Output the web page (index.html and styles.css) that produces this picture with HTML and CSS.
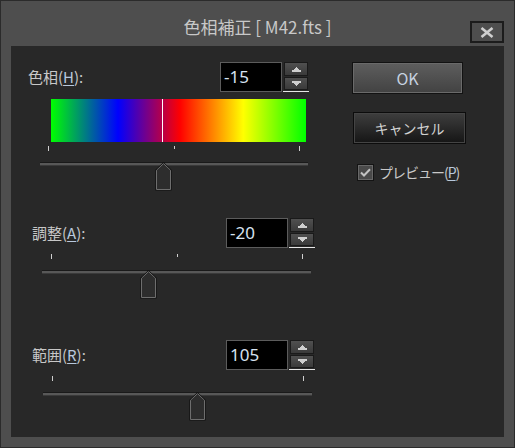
FILE: index.html
```html
<!DOCTYPE html>
<html lang="ja">
<head>
<meta charset="utf-8">
<title>色相補正</title>
<link rel="stylesheet" href="styles.css">
</head>
<body>
<div class="window">
  <header class="titlebar">
    <div class="spacer"></div>
    <h1 class="title">色相補正 [ M42.fts ]</h1>
    <button class="close" aria-label="閉じる">
      <svg width="14" height="11" viewBox="0 0 14 11"><path d="M1.5 1 L12.5 10 M12.5 1 L1.5 10" stroke="#cfcfcf" stroke-width="2.6" fill="none"/></svg>
    </button>
  </header>
  <main class="client">
    <div class="left">
      <section class="group hue">
        <div class="head">
          <span class="label">色相(<u>H</u>):</span>
          <div class="spin">
            <div class="field">-15</div>
            <div class="arrows">
              <div class="arrow up"><svg width="9" height="5" viewBox="0 0 9 5" shape-rendering="crispEdges"><rect x="4" y="0" width="1" height="1" fill="#cfcfcf"/><rect x="3" y="1" width="3" height="1" fill="#cfcfcf"/><rect x="2" y="2" width="5" height="1" fill="#cfcfcf"/><rect x="0" y="3" width="9" height="2" fill="#cfcfcf"/></svg></div>
              <div class="arrow down"><svg width="9" height="5" viewBox="0 0 9 5" shape-rendering="crispEdges"><rect x="0" y="0" width="9" height="2" fill="#cfcfcf"/><rect x="2" y="2" width="5" height="1" fill="#cfcfcf"/><rect x="3" y="3" width="3" height="1" fill="#cfcfcf"/><rect x="4" y="4" width="1" height="1" fill="#cfcfcf"/></svg></div>
              <div class="focus-line"></div>
            </div>
          </div>
        </div>
        <div class="huebar"><div class="marker"></div></div>
        <div class="scale">
          <div class="ticks"><i></i><i class="mid"></i><i></i></div>
          <div class="slider">
            <div class="track"></div>
            <svg class="thumb" style="left:115px" width="17" height="29" viewBox="0 0 17 29"><path d="M8.5 0.3 L16.6 7.8 V28.6 H0.4 V7.8 Z" fill="#0e0e0e"/><path d="M8.5 1.6 L15.5 8.2 V27.5 H1.5 V8.2 Z" fill="#2d2d2d" stroke="#6e6e6e" stroke-width="1"/></svg>
          </div>
        </div>
      </section>

      <section class="group adj">
        <div class="head">
          <span class="label">調整(<u>A</u>):</span>
          <div class="spin">
            <div class="field">-20</div>
            <div class="arrows">
              <div class="arrow up"><svg width="9" height="5" viewBox="0 0 9 5" shape-rendering="crispEdges"><rect x="4" y="0" width="1" height="1" fill="#cfcfcf"/><rect x="3" y="1" width="3" height="1" fill="#cfcfcf"/><rect x="2" y="2" width="5" height="1" fill="#cfcfcf"/><rect x="0" y="3" width="9" height="2" fill="#cfcfcf"/></svg></div>
              <div class="arrow down"><svg width="9" height="5" viewBox="0 0 9 5" shape-rendering="crispEdges"><rect x="0" y="0" width="9" height="2" fill="#cfcfcf"/><rect x="2" y="2" width="5" height="1" fill="#cfcfcf"/><rect x="3" y="3" width="3" height="1" fill="#cfcfcf"/><rect x="4" y="4" width="1" height="1" fill="#cfcfcf"/></svg></div>
              <div class="focus-line"></div>
            </div>
          </div>
        </div>
        <div class="scale">
          <div class="ticks"><i></i><i class="mid"></i><i></i></div>
          <div class="slider">
            <div class="track"></div>
            <svg class="thumb" style="left:98px" width="17" height="29" viewBox="0 0 17 29"><path d="M8.5 0.3 L16.6 7.8 V28.6 H0.4 V7.8 Z" fill="#0e0e0e"/><path d="M8.5 1.6 L15.5 8.2 V27.5 H1.5 V8.2 Z" fill="#2d2d2d" stroke="#6e6e6e" stroke-width="1"/></svg>
          </div>
        </div>
      </section>

      <section class="group range">
        <div class="head">
          <span class="label">範囲(<u>R</u>):</span>
          <div class="spin">
            <div class="field">105</div>
            <div class="arrows">
              <div class="arrow up"><svg width="9" height="5" viewBox="0 0 9 5" shape-rendering="crispEdges"><rect x="4" y="0" width="1" height="1" fill="#cfcfcf"/><rect x="3" y="1" width="3" height="1" fill="#cfcfcf"/><rect x="2" y="2" width="5" height="1" fill="#cfcfcf"/><rect x="0" y="3" width="9" height="2" fill="#cfcfcf"/></svg></div>
              <div class="arrow down"><svg width="9" height="5" viewBox="0 0 9 5" shape-rendering="crispEdges"><rect x="0" y="0" width="9" height="2" fill="#cfcfcf"/><rect x="2" y="2" width="5" height="1" fill="#cfcfcf"/><rect x="3" y="3" width="3" height="1" fill="#cfcfcf"/><rect x="4" y="4" width="1" height="1" fill="#cfcfcf"/></svg></div>
              <div class="focus-line"></div>
            </div>
          </div>
        </div>
        <div class="scale">
          <div class="ticks"><i></i><i></i></div>
          <div class="slider">
            <div class="track"></div>
            <svg class="thumb" style="left:146px" width="17" height="29" viewBox="0 0 17 29"><path d="M8.5 0.3 L16.6 7.8 V28.6 H0.4 V7.8 Z" fill="#0e0e0e"/><path d="M8.5 1.6 L15.5 8.2 V27.5 H1.5 V8.2 Z" fill="#2d2d2d" stroke="#6e6e6e" stroke-width="1"/></svg>
          </div>
        </div>
      </section>
    </div>

    <div class="right">
      <button class="btn ok">OK</button>
      <button class="btn cancel">キャンセル</button>
      <label class="check">
        <span class="box"><svg width="11" height="9" viewBox="0 0 11 9"><path d="M1 4.5 L4 7.5 L10 1.2" stroke="#c4c4c4" stroke-width="2" fill="none"/></svg></span>
        <span class="check-text">プレビュー(<u>P</u>)</span>
      </label>
    </div>
  </main>
</div>
</body>
</html>
```

FILE: styles.css
```css
* {
  box-sizing: border-box;
  margin: 0;
  padding: 0;
}

body {
  margin: 0;
  background: #4e4e4e;
  font-family: "Noto Sans CJK JP", "Noto Sans", sans-serif;
}

.window {
  width: 515px;
  height: 448px;
  border: 1px solid #2b2b2b;
  background: #4e4e4e;
  padding: 0 10px 10px;
  display: flex;
  flex-direction: column;
}

.titlebar {
  height: 45px;
  display: grid;
  grid-template-columns: 1fr auto 1fr;
  align-items: start;
}

.title {
  font-size: 17px;
  font-weight: 400;
  line-height: 20px;
  color: #c8c8c8;
  margin-top: 16px;
  white-space: nowrap;
}

.close {
  justify-self: end;
  width: 34px;
  height: 22px;
  margin-top: 20px;
  border: 2px solid #1c1c1c;
  background: #4e4e4e;
  display: flex;
  align-items: center;
  justify-content: center;
}

.client {
  flex: 1;
  background: #282828;
  display: flex;
  padding-top: 16px;
}

.left {
  width: 320px;
  flex: none;
}

.group.hue {
  margin-left: 17px;
}

.group.adj {
  margin-left: 21px;
  margin-top: 27px;
}

.group.range {
  margin-left: 21px;
  margin-top: 41px;
}

.head {
  display: flex;
  align-items: center;
  height: 30px;
  width: 282px;
}

.hue .head {
  width: 280px;
}

.label {
  font-size: 15px;
  color: #c8c8c8;
  line-height: 20px;
}

.label u,
.check-text u {
  color: #b8c8dc;
  text-underline-offset: 2px;
}

.spin {
  margin-left: auto;
  display: flex;
  gap: 2px;
}

.field {
  width: 62px;
  height: 30px;
  background: #000;
  border: 1px solid #5c5c5c;
  color: #d6e2f0;
  font-family: "Noto Sans", sans-serif;
  font-size: 17px;
  line-height: 27px;
  padding-left: 3px;
}

.arrows {
  width: 24px;
  display: flex;
  flex-direction: column;
  gap: 1px;
}

.arrow {
  border: 1px solid #1a1a1a;
  background: linear-gradient(#505050, #3a3a3a);
  display: flex;
  align-items: center;
  justify-content: center;
}

.arrow.up {
  height: 14px;
}

.arrow.down {
  height: 13px;
}

.focus-line {
  height: 1px;
  background: #e6e6e6;
  margin: 0 -1px;
}

.huebar {
  position: relative;
  margin: 7px 0 0 23px;
  width: 255px;
  height: 43px;
  background: linear-gradient(to right, #00ff00 0%, #0000ff 26.3%, #ff0000 50.6%, #ffff00 75.4%, #00ff00 100%);
}

.marker {
  position: absolute;
  left: 111px;
  top: 0;
  bottom: 0;
  width: 1px;
  background: #ffffff;
}

.scale {
  margin-left: 10px;
  width: 269px;
}

.hue .scale {
  margin-left: 12px;
  width: 268px;
}

.range .scale {
  margin-left: 11px;
}

.ticks {
  height: 5px;
  display: flex;
  justify-content: space-between;
  align-items: flex-start;
  padding: 0 8px 0 9px;
  margin-top: 6px;
}

.hue .ticks {
  padding: 0 8px;
  margin-top: 4px;
}

.ticks i {
  display: block;
  width: 1px;
  height: 5px;
  background: #cfcfcf;
}

.ticks i.mid {
  height: 3px;
}

.slider {
  position: relative;
  height: 29px;
}

.hue .slider {
  margin-top: 1px;
}

.track {
  margin-top: 11px;
  height: 4px;
  border-top: 1px solid #1a1a1a;
  border-bottom: 1px solid #3a3a3a;
  background: #585858;
}

.thumb {
  position: absolute;
  top: 0;
  display: block;
}

.right {
  display: flex;
  flex-direction: column;
  align-items: flex-start;
  padding-left: 21px;
}

.btn {
  height: 32px;
  font-family: "Noto Sans CJK JP", "Noto Sans", sans-serif;
  cursor: default;
}

.btn.ok {
  width: 111px;
  border: 1px solid #121212;
  background: linear-gradient(#5e5e5e, #424242);
  box-shadow: inset 0 0 0 1px #6a6a6a;
  color: #c6d2e0;
  font-size: 16px;
}

.btn.cancel {
  width: 113px;
  margin-top: 18px;
  margin-left: 1px;
  border: 1px solid #0c0c0c;
  background: linear-gradient(#3e3e3e, #151515);
  box-shadow: inset 0 0 0 1px #444444;
  color: #d2d2d2;
  font-size: 14px;
}

.check {
  margin-top: 18px;
  margin-left: 5px;
  display: flex;
  align-items: center;
  gap: 5px;
  font-size: 14px;
  letter-spacing: -1px;
  color: #c8c8c8;
}

.box {
  width: 17px;
  height: 17px;
  border: 1px solid #141414;
  background: #4a4a4a;
  box-shadow: inset 0 0 0 1px #686868;
  display: flex;
  align-items: center;
  justify-content: center;
}
```
